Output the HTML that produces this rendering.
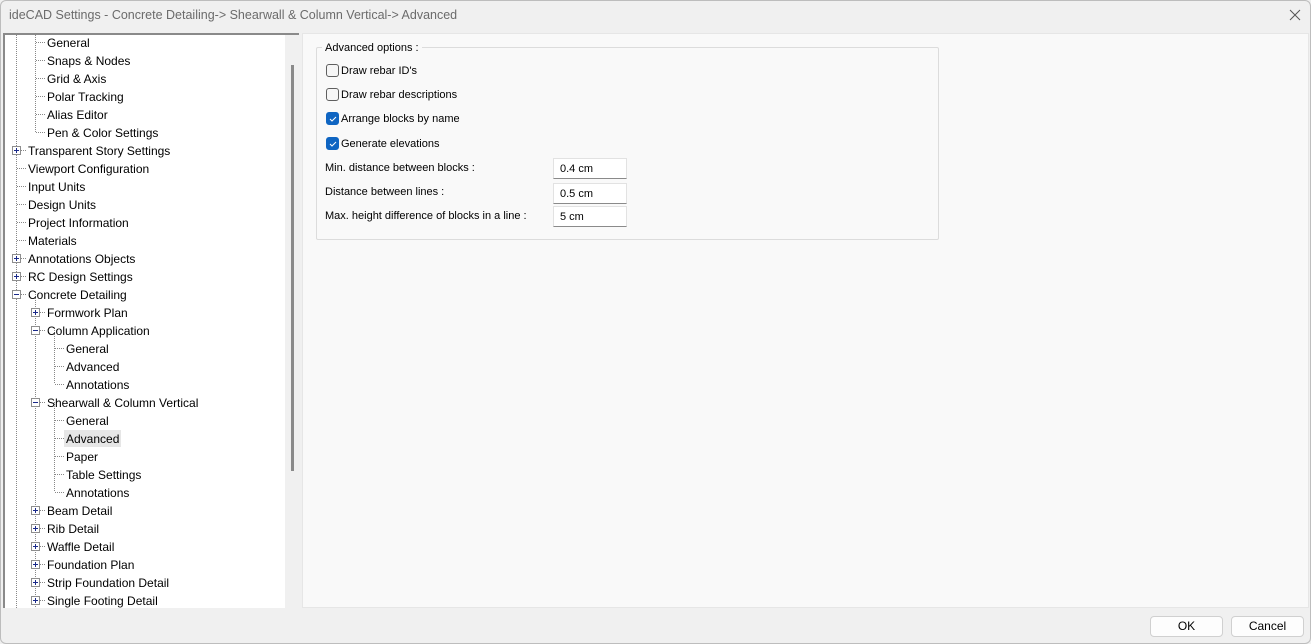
<!DOCTYPE html>
<html><head><meta charset="utf-8"><style>
*{margin:0;padding:0;box-sizing:border-box}
body{width:1311px;height:644px;background:#f0f0f0;font-family:"Liberation Sans",sans-serif;position:relative;overflow:hidden}
.frame{position:absolute;left:0;top:0;width:1311px;height:644px;border:1px solid #bdbdbd;border-radius:6px;pointer-events:none}
.title{position:absolute;left:9px;top:8px;font-size:12.5px;color:#6b6b6b}
.tree{position:absolute;left:3px;top:33px;width:296px;height:575px;background:#fff;border-top:2px solid #8a8a8a;border-left:2px solid #8a8a8a;overflow:hidden}
.sb{position:absolute;left:280px;top:0;width:16px;height:575px;background:#f0f0f0}
.thumb{position:absolute;left:6px;top:30px;width:3px;height:406px;background:#8a8a8a}
.t{position:absolute;font-size:12px;color:#000;white-space:nowrap;line-height:16px}
.panel{position:absolute;left:302px;top:33px;width:1007px;height:575px;background:#f9f9f9;border:1px solid #e6e6e6}
.grp{position:absolute;left:316px;top:47px;width:623px;height:193px;border:1px solid #dcdcdc;border-radius:2px}
.gl{position:absolute;left:322px;top:42px;background:#f9f9f9;padding:0 3px;font-size:11px;color:#000}
.l{position:absolute;font-size:11px;color:#000;white-space:nowrap}
.cb{position:absolute;left:326px;width:13px;height:13px;border:1px solid #5f5f5f;border-radius:3px;background:#f6f6f6}
.cb.on{background:#0f65c2;border-color:#0f65c2}
.in{position:absolute;left:553px;width:74px;height:21px;background:#fff;border:1px solid #e2e2e2;border-bottom:1px solid #8a8a8a;font-size:11px;padding:4px 0 0 6px}
.btn{position:absolute;top:616px;width:73px;height:21px;background:#fdfdfd;border:1px solid #d0d0d0;border-radius:4px;font-size:12px;text-align:center;line-height:19px}
</style></head><body>
<div class="title">ideCAD Settings - Concrete Detailing-&gt; Shearwall &amp; Column Vertical-&gt; Advanced</div>
<svg style="position:absolute;left:1289px;top:9px" width="12" height="12"><path d="M1 1L11 11M11 1L1 11" stroke="#555" stroke-width="1"/></svg>

<div class="tree">
<svg width="280" height="650" style="position:absolute;left:-5px;top:-35px">
<g stroke="#888" stroke-width="1" stroke-dasharray="1,1" fill="none">
<line x1="16.5" y1="35" x2="16.5" y2="650"/>
<line x1="35.5" y1="35" x2="35.5" y2="132"/>
<line x1="35.5" y1="294" x2="35.5" y2="650"/>
<line x1="54.5" y1="330" x2="54.5" y2="384"/>
<line x1="54.5" y1="402" x2="54.5" y2="492"/>
<path d="M36 42.5h9M36 60.5h9M36 78.5h9M36 96.5h9M36 114.5h9M36 132.5h9
M17 150.5h9M17 168.5h9M17 186.5h9M17 204.5h9M17 222.5h9M17 240.5h9M17 258.5h9M17 276.5h9M17 294.5h9
M36 312.5h9M36 330.5h9M55 348.5h9M55 366.5h9M55 384.5h9M36 402.5h9M55 420.5h9M55 438.5h9M55 456.5h9M55 474.5h9M55 492.5h9
M36 510.5h9M36 528.5h9M36 546.5h9M36 564.5h9M36 582.5h9M36 600.5h9"/>
</g>
<g fill="#fff" stroke="#8e8e8e">
<rect x="12.5" y="146.5" width="8" height="8"/><rect x="12.5" y="254.5" width="8" height="8"/><rect x="12.5" y="272.5" width="8" height="8"/><rect x="12.5" y="290.5" width="8" height="8"/>
<rect x="31.5" y="308.5" width="8" height="8"/><rect x="31.5" y="326.5" width="8" height="8"/><rect x="31.5" y="398.5" width="8" height="8"/>
<rect x="31.5" y="506.5" width="8" height="8"/><rect x="31.5" y="524.5" width="8" height="8"/><rect x="31.5" y="542.5" width="8" height="8"/><rect x="31.5" y="560.5" width="8" height="8"/><rect x="31.5" y="578.5" width="8" height="8"/><rect x="31.5" y="596.5" width="8" height="8"/>
</g>
<g stroke="#1a2a8a" stroke-width="1">
<path d="M14 150.5h5M16.5 148v5M14 258.5h5M16.5 256v5M14 276.5h5M16.5 274v5M14 294.5h5
M33 312.5h5M35.5 310v5M33 330.5h5M33 402.5h5
M33 510.5h5M35.5 508v5M33 528.5h5M35.5 526v5M33 546.5h5M35.5 544v5M33 564.5h5M35.5 562v5M33 582.5h5M35.5 580v5M33 600.5h5M35.5 598v5"/>
</g>
<rect x="64" y="430" width="57" height="17" fill="#e6e6e6"/>
</svg>
<div style="position:absolute;left:-5px;top:-34px">
<div class="t" style="left:47px;top:34px">General</div>
<div class="t" style="left:47px;top:52px">Snaps &amp; Nodes</div>
<div class="t" style="left:47px;top:70px">Grid &amp; Axis</div>
<div class="t" style="left:47px;top:88px">Polar Tracking</div>
<div class="t" style="left:47px;top:106px">Alias Editor</div>
<div class="t" style="left:47px;top:124px">Pen &amp; Color Settings</div>
<div class="t" style="left:28px;top:142px">Transparent Story Settings</div>
<div class="t" style="left:28px;top:160px">Viewport Configuration</div>
<div class="t" style="left:28px;top:178px">Input Units</div>
<div class="t" style="left:28px;top:196px">Design Units</div>
<div class="t" style="left:28px;top:214px">Project Information</div>
<div class="t" style="left:28px;top:232px">Materials</div>
<div class="t" style="left:28px;top:250px">Annotations Objects</div>
<div class="t" style="left:28px;top:268px">RC Design Settings</div>
<div class="t" style="left:28px;top:286px">Concrete Detailing</div>
<div class="t" style="left:47px;top:304px">Formwork Plan</div>
<div class="t" style="left:47px;top:322px">Column Application</div>
<div class="t" style="left:66px;top:340px">General</div>
<div class="t" style="left:66px;top:358px">Advanced</div>
<div class="t" style="left:66px;top:376px">Annotations</div>
<div class="t" style="left:47px;top:394px">Shearwall &amp; Column Vertical</div>
<div class="t" style="left:66px;top:412px">General</div>
<div class="t" style="left:66px;top:430px">Advanced</div>
<div class="t" style="left:66px;top:448px">Paper</div>
<div class="t" style="left:66px;top:466px">Table Settings</div>
<div class="t" style="left:66px;top:484px">Annotations</div>
<div class="t" style="left:47px;top:502px">Beam Detail</div>
<div class="t" style="left:47px;top:520px">Rib Detail</div>
<div class="t" style="left:47px;top:538px">Waffle Detail</div>
<div class="t" style="left:47px;top:556px">Foundation Plan</div>
<div class="t" style="left:47px;top:574px">Strip Foundation Detail</div>
<div class="t" style="left:47px;top:592px">Single Footing Detail</div>
</div>
<div class="sb"><div class="thumb"></div></div>
</div>

<div class="panel"></div>
<div class="grp"></div>
<div class="gl">Advanced options :</div>
<div class="cb" style="top:64px"></div><div class="l" style="left:341px;top:65px">Draw rebar ID's</div>
<div class="cb" style="top:88px"></div><div class="l" style="left:341px;top:89px">Draw rebar descriptions</div>
<div class="cb on" style="top:112px"><svg width="11" height="11" style="position:absolute;left:0;top:0"><path d="M3 6l2 2 4-4" stroke="#fff" stroke-width="1" fill="none"/></svg></div><div class="l" style="left:341px;top:113px">Arrange blocks by name</div>
<div class="cb on" style="top:137px"><svg width="11" height="11" style="position:absolute;left:0;top:0"><path d="M3 6l2 2 4-4" stroke="#fff" stroke-width="1" fill="none"/></svg></div><div class="l" style="left:341px;top:138px">Generate elevations</div>
<div class="l" style="left:325px;top:162px">Min. distance between blocks :</div>
<div class="l" style="left:325px;top:186px">Distance between lines :</div>
<div class="l" style="left:325px;top:210px">Max. height difference of blocks in a line :</div>
<div class="in" style="top:158px">0.4 cm</div>
<div class="in" style="top:183px">0.5 cm</div>
<div class="in" style="top:206px">5 cm</div>

<div class="btn" style="left:1150px">OK</div>
<div class="btn" style="left:1231px">Cancel</div>
<div class="frame"></div>
</body></html>
